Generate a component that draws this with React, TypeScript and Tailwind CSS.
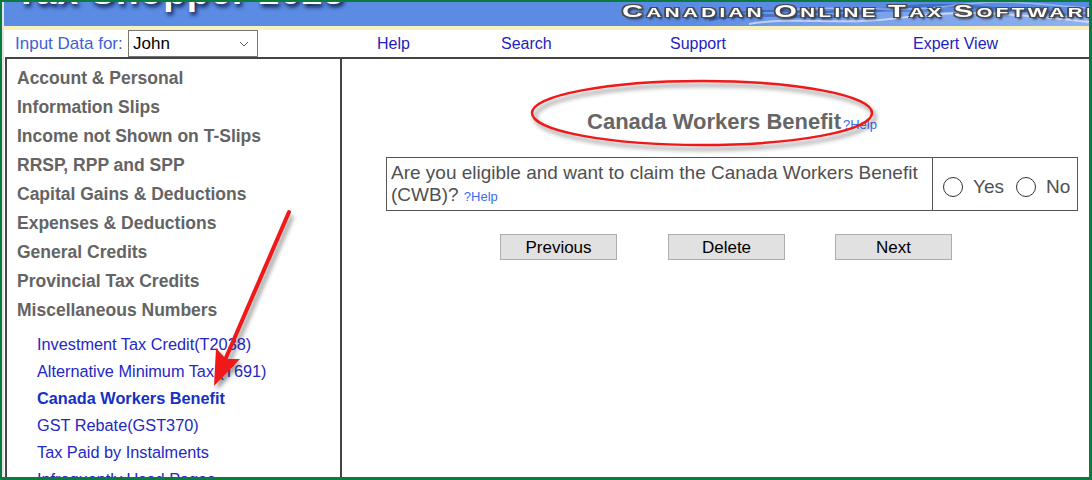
import React from "react";

const mainItems = [
  "Account & Personal",
  "Information Slips",
  "Income not Shown on T-Slips",
  "RRSP, RPP and SPP",
  "Capital Gains & Deductions",
  "Expenses & Deductions",
  "General Credits",
  "Provincial Tax Credits",
  "Miscellaneous Numbers",
];

const subItems = [
  { t: "Investment Tax Credit(T2038)", b: false },
  { t: "Alternative Minimum Tax (T691)", b: false },
  { t: "Canada Workers Benefit", b: true },
  { t: "GST Rebate(GST370)", b: false },
  { t: "Tax Paid by Instalments", b: false },
  { t: "Infrequently Used Pages", b: false },
];

function Logo() {
  const words = ["CANADIAN", "ONLINE", "TAX", "SOFTWARE"];
  return (
    <div className="relative mt-[1px] whitespace-nowrap leading-none font-bold text-white tracking-[2px] scale-x-[171%] origin-left [text-shadow:-1px_-1px_0_#4a4a4a,1px_-1px_0_#4a4a4a,-1px_1px_0_#4a4a4a,1px_1px_0_#4a4a4a,1px_2px_2px_#1a1a1a]">
      {words.map((w, i) => (
        <span key={i}>
          <span className="text-[17px]">{w[0]}</span>
          <span className="text-[12px]">{w.slice(1)}</span>
          {i < words.length - 1 ? <span className="text-[12px]"> </span> : null}
        </span>
      ))}
    </div>
  );
}

function Radio() {
  return <span className="inline-block w-[20px] h-[20px] rounded-full border border-[#333] bg-white shrink-0" />;
}

export default function App() {
  return (
    <div className="relative w-[1092px] h-[480px] overflow-hidden bg-[#0b7a3f] pt-[2px] pl-[2px] pr-[3px] pb-[3px] font-['Liberation_Sans',Arial,sans-serif]">
      <div className="flex flex-col h-full bg-white border-l-2 border-[#e4e4e4]">
        {/* Banner */}
        <div className="relative h-[24px] shrink-0 overflow-hidden bg-[#5b8be3] flex">
          <svg className="absolute right-0 top-0" width="420" height="24" viewBox="0 0 420 24">
            <defs>
              <linearGradient id="wg" x1="0" y1="0" x2="1" y2="0">
                <stop offset="0" stopColor="#5b8be3" stopOpacity="0" />
                <stop offset="0.25" stopColor="#7fa6ee" stopOpacity="0.6" />
                <stop offset="1" stopColor="#9dbbf2" stopOpacity="0.8" />
              </linearGradient>
            </defs>
            <rect x="0" y="10" width="420" height="14" fill="url(#wg)" />
            <path d="M40 18 C90 6 140 22 200 10 S300 4 420 14" stroke="#2f5cb0" strokeWidth="3" fill="none" opacity="0.6" />
            <path d="M80 22 C130 14 170 24 230 16 S330 10 420 20" stroke="#ffffff" strokeWidth="2" fill="none" opacity="0.55" />
            <path d="M120 8 C170 2 220 12 280 4 S360 2 420 6" stroke="#ffffff" strokeWidth="1.5" fill="none" opacity="0.4" />
            <path d="M60 12 C110 4 150 16 190 6" stroke="#1f4ea3" strokeWidth="2" fill="none" opacity="0.5" />
          </svg>
          <div className="relative w-[618px] shrink-0 pl-[11px]">
            <div className="-mt-[29px] whitespace-nowrap text-[37px] leading-[37px] font-bold text-white tracking-[1px] [text-shadow:2px_3px_4px_#0d1f4d]">
              Tax Shopper 2023
            </div>
          </div>
          <Logo />
        </div>
        <div className="h-[4px] shrink-0 bg-[#f6f1bf]" />
        {/* Nav */}
        <div className="h-[27px] shrink-0 flex items-center bg-white">
          <span className="ml-[11px] w-[113px] shrink-0 text-[17px] text-[#3b62d6] whitespace-nowrap">Input Data for:</span>
          <div className="h-[27px] w-[130px] shrink-0 border border-[#767676] bg-white flex items-center justify-between pl-[4px] pr-[8px] text-[17px] text-black">
            <span>John</span>
            <svg width="10" height="6" viewBox="0 0 10 6">
              <path d="M1 1 L5 5 L9 1" stroke="#555" strokeWidth="1" fill="none" />
            </svg>
          </div>
          <span className="ml-[119px] w-[124px] shrink-0 text-[16px] text-[#1e22c0]">Help</span>
          <span className="w-[169px] shrink-0 text-[16px] text-[#1e22c0]">Search</span>
          <span className="w-[243px] shrink-0 text-[16px] text-[#1e22c0]">Support</span>
          <span className="shrink-0 text-[16px] text-[#1e22c0]">Expert View</span>
        </div>
        {/* Main */}
        <div className="flex flex-1 min-h-0">
          <div className="ml-[1px] w-[337px] shrink-0 border-2 border-b-0 border-[#444] overflow-hidden pt-[5px]">
            {mainItems.map((m) => (
              <div key={m} className="h-[29px] leading-[29px] pl-[10px] text-[17.5px] font-bold text-[#646464] whitespace-nowrap">
                {m}
              </div>
            ))}
            <div className="mt-[6px]">
              {subItems.map((s) => (
                <div
                  key={s.t}
                  className={
                    s.b
                      ? "h-[27px] leading-[27px] pl-[30px] text-[16.3px] font-bold text-[#1530c4] whitespace-nowrap"
                      : "h-[27px] leading-[27px] pl-[30px] text-[16.3px] text-[#2426c6] whitespace-nowrap"
                  }
                >
                  {s.t}
                </div>
              ))}
            </div>
          </div>
          <div className="flex-1 border-t-2 border-[#444]">
            <div className="ml-[44px] w-[692px]">
              <div className="pt-[50px] text-center leading-[26px] whitespace-nowrap">
                <span className="text-[22px] font-bold text-[#666]">Canada Workers Benefit</span>
                <span className="ml-[2px] text-[13px] text-[#3a6cf0]">?Help</span>
              </div>
              <div className="mt-[19px] h-[54px] flex border border-[#555]">
                <div className="w-[546px] shrink-0 border-r border-[#555] px-[4px] pt-[4px] text-[19px] leading-[22px] text-[#505050]">
                  Are you eligible and want to claim the Canada Workers Benefit (CWB)?{" "}
                  <span className="text-[13px] leading-[13px] text-[#3a6cf0]">?Help</span>
                </div>
                <div className="flex-1 flex items-center pl-[10px] pt-[6px] text-[19px] text-[#505050]">
                  <Radio />
                  <span className="ml-[10px]">Yes</span>
                  <span className="ml-[12px] flex"><Radio /></span>
                  <span className="ml-[10px]">No</span>
                </div>
              </div>
              <div className="mt-[23px] flex pl-[114px]">
                <button className="w-[117px] h-[26px] bg-[#e1e1e1] border border-[#adadad] text-[17px] text-black leading-none">Previous</button>
                <button className="ml-[51px] w-[117px] h-[26px] bg-[#e1e1e1] border border-[#adadad] text-[17px] text-black leading-none">Delete</button>
                <button className="ml-[50px] w-[117px] h-[26px] bg-[#e1e1e1] border border-[#adadad] text-[17px] text-black leading-none">Next</button>
              </div>
            </div>
          </div>
        </div>
      </div>
      {/* Annotations */}
      <svg className="absolute inset-0 pointer-events-none" width="1092" height="480" viewBox="0 0 1092 480">
        <defs>
          <filter id="sh" x="-20%" y="-20%" width="140%" height="140%">
            <feGaussianBlur stdDeviation="2.2" />
          </filter>
        </defs>
        <g opacity="0.45" transform="translate(3 4)" filter="url(#sh)">
          <ellipse cx="702" cy="113" rx="170" ry="32" fill="none" stroke="#222" strokeWidth="3" />
          <line x1="289" y1="212" x2="225" y2="360" stroke="#222" strokeWidth="4" />
          <polygon points="214,386 217,349 226,359 239,359" fill="#222" />
        </g>
        <ellipse cx="702" cy="113" rx="170" ry="32" fill="none" stroke="#f01818" strokeWidth="2.5" />
        <line x1="289" y1="212" x2="225" y2="360" stroke="#f01818" strokeWidth="4" strokeLinecap="round" />
        <polygon points="214,386 216,348 226,359 240,359" fill="#f01818" />
      </svg>
    </div>
  );
}
